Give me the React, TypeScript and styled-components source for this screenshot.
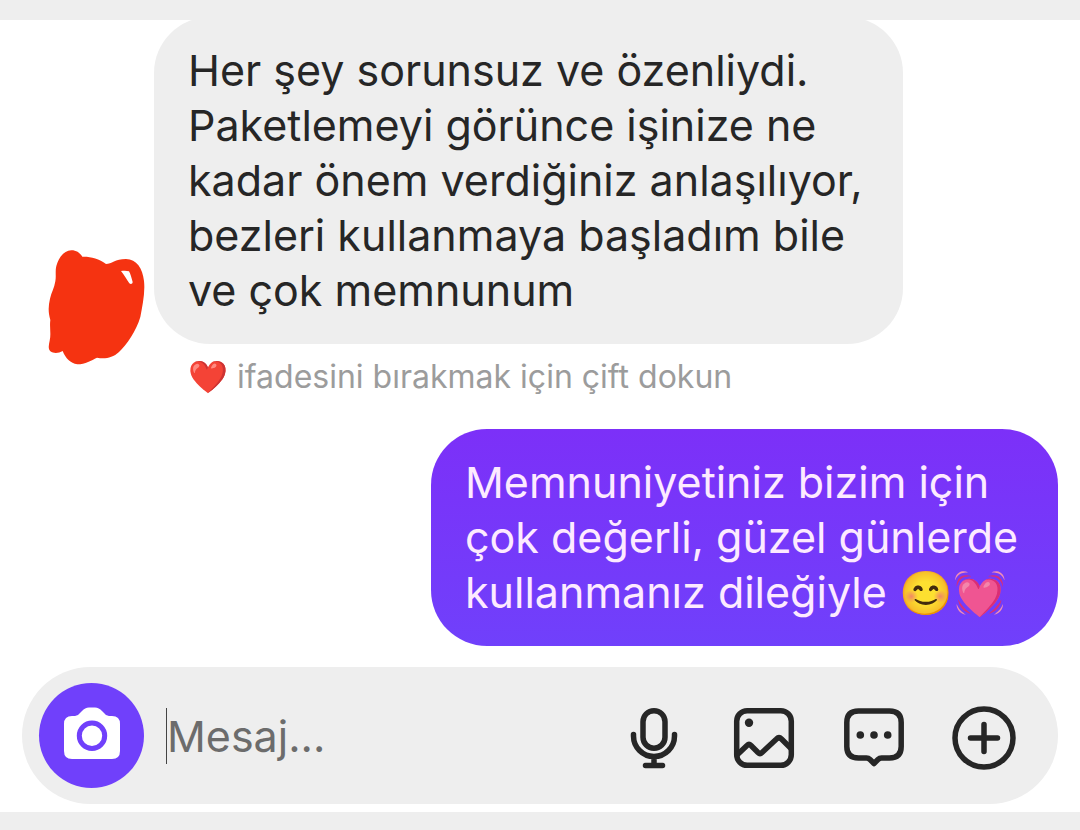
import React from "react";
import styled, { createGlobalStyle } from "styled-components";

const ink = "#262626";
const accent = "#7040fb";
const surface = "#eeeeee";

const GlobalStyle = createGlobalStyle`
  *, *::before, *::after { box-sizing: border-box; }
  body {
    margin: 0;
    background: ${surface};
    font-family: Inter, "Noto Sans", sans-serif;
    color: ${ink};
  }
`;

const Page = styled.div`
  padding: 20px 0 18px;
  background: ${surface};
`;

const Chat = styled.main`
  display: flex;
  flex-direction: column;
  padding: 0 22px 8px;
  overflow: hidden;
  background: #ffffff;
`;

const Incoming = styled.section`
  display: flex;
  align-items: flex-end;
  gap: 9px;
  padding-left: 25px;
`;

const Avatar = styled.svg`
  flex: none;
  width: 98px;
  height: 116px;
  margin-bottom: 34px;
`;

const MessageColumn = styled.div`
  flex: 0 1 749px;
  min-width: 0;
`;

const Bubble = styled.p<{ $own?: boolean }>`
  margin: ${(p) => (p.$own ? "30px 0 0 auto" : "-3px 0 0")};
  max-width: ${(p) => (p.$own ? "627px" : "none")};
  padding: 26px 34px;
  border-radius: 56px;
  font-size: 43px;
  line-height: 55px;
  color: ${(p) => (p.$own ? "#fdeaff" : ink)};
  background: ${(p) => (p.$own ? `linear-gradient(#7c30f8, ${accent})` : surface)};
`;

const Hint = styled.p`
  margin: 11px 0 0;
  padding-left: 34px;
  font-size: 32px;
  line-height: 44px;
  color: #9c9c9c;
`;

const Composer = styled.form`
  display: flex;
  align-items: center;
  margin-top: 21px;
  padding: 16px 42px 16px 17px;
  border-radius: 69px;
  background: ${surface};
`;

const CameraButton = styled.button`
  flex: none;
  width: 105px;
  height: 105px;
  padding: 0;
  border: 0;
  border-radius: 50%;
  background: ${accent};
  svg { display: block; }
`;

const Field = styled.label`
  display: flex;
  flex: 1;
  align-items: center;
  min-width: 0;
  margin-left: 22px;
`;

const Caret = styled.span`
  flex: none;
  width: 1px;
  height: 56px;
  background: #444444;
`;

const MessageInput = styled.input`
  flex: 1;
  min-width: 0;
  height: 56px;
  padding: 0;
  border: 0;
  outline: 0;
  background: transparent;
  font: 400 43px/56px Inter, "Noto Sans", sans-serif;
  color: ${ink};
  &::placeholder { color: #6c6c6c; opacity: 1; }
`;

const Actions = styled.div`
  display: flex;
  gap: 46px;
`;

const IconButton = styled.button`
  width: 64px;
  height: 68px;
  padding: 0;
  border: 0;
  background: none;
  color: ${ink};
  svg {
    display: block;
    overflow: visible;
    fill: none;
    stroke: currentColor;
    stroke-width: 5.5;
    stroke-linecap: round;
    stroke-linejoin: round;
  }
  .dot { fill: currentColor; stroke: none; }
`;

function Icon({ label, children }: { label: string; children: React.ReactNode }) {
  return (
    <IconButton type="button" aria-label={label}>
      <svg width="64" height="68" viewBox="0 0 64 68">{children}</svg>
    </IconButton>
  );
}

export default function App() {
  return (
    <>
      <GlobalStyle />
      <Page>
        <Chat>
          <Incoming>
            <Avatar viewBox="81 54 294 348" aria-hidden="true">
              <path
                fill="#f53311"
                fillRule="evenodd"
                d="M109 105C115 82 130 59 154 58C170 58 180 66 187 77C210 76 237 82 258 99C275 99 285 84 318 84C350 85 368 112 372 150C376 185 367 225 361 258C349 299 320 342 297 363C277 382 253 384 231 380C214 388 196 400 172 400C151 397 137 382 128 360C116 367 101 368 91 361C83 352 87 340 89 329C94 308 88 289 91 267C84 244 85 224 90 203C94 185 103 171 106 151C109 136 105 119 109 105ZM303 120C312 131 321 147 328 157C332 160 338 159 338 153C334 139 332 130 327 121C319 118 310 119 303 120Z"
              />
            </Avatar>
            <MessageColumn>
              <Bubble>
                Her şey sorunsuz ve özenliydi. Paketlemeyi görünce işinize ne kadar önem
                verdiğiniz anlaşılıyor, bezleri kullanmaya başladım bile ve çok memnunum
              </Bubble>
              <Hint>❤️ ifadesini bırakmak için çift dokun</Hint>
            </MessageColumn>
          </Incoming>

          <Bubble $own>
            Memnuniyetiniz bizim için çok değerli, güzel günlerde kullanmanız dileğiyle 😊💓
          </Bubble>

          <Composer>
            <CameraButton type="button" aria-label="Kamera">
              <svg width="105" height="105" viewBox="0 0 105 105">
                <path
                  fill="#fff"
                  d="M33 33H36Q39 33 41 30L43 28Q46 24.500 50 24.500H56Q60 24.500 63 28L65 30Q67 33 70 33H73Q81 33 81 41V68Q81 76 73 76H33Q25 76 25 68V41Q25 33 33 33Z"
                />
                <circle cx="53" cy="52.700" r="12.700" fill="none" stroke={accent} strokeWidth="5" />
              </svg>
            </CameraButton>
            <Field>
              <Caret />
              <MessageInput type="text" placeholder="Mesaj..." aria-label="Mesaj" />
            </Field>
            <Actions>
              <Icon label="Sesli mesaj">
                <rect x="21" y="8.700" width="22" height="37.500" rx="11" />
                <path d="M11.500 32.500V34a20.500 20.500 0 0 0 41 0v-1.500M32 54.500v9M23.500 63.500h17" />
              </Icon>
              <Icon label="Galeri">
                <rect x="4.700" y="8.700" width="54.600" height="54.600" rx="10.500" />
                <path d="M5 53L15 43.500Q17 41.500 19 43.500L26 50.500Q28 52.500 30 50.500L44.500 37Q47 34.500 49.500 37L59 46.500" />
                <circle className="dot" cx="17" cy="20.700" r="4.200" />
              </Icon>
              <Icon label="Çıkartmalar">
                <path d="M16.500 9H47.500Q59.200 9 59.200 20.500V44.500Q59.200 56 47.500 56H39.500Q37.500 56 36 57.500L32 61.500L28 57.500Q26.500 56 24.500 56H16.500Q4.800 56 4.800 44.500V20.500Q4.800 9 16.500 9Z" />
                <circle className="dot" cx="18.300" cy="33" r="3.800" />
                <circle className="dot" cx="32" cy="33" r="3.800" />
                <circle className="dot" cx="45.700" cy="33" r="3.800" />
              </Icon>
              <Icon label="Daha fazla">
                <circle cx="32" cy="36" r="29" />
                <path d="M18.500 36h27M32 22.500v27" />
              </Icon>
            </Actions>
          </Composer>
        </Chat>
      </Page>
    </>
  );
}
